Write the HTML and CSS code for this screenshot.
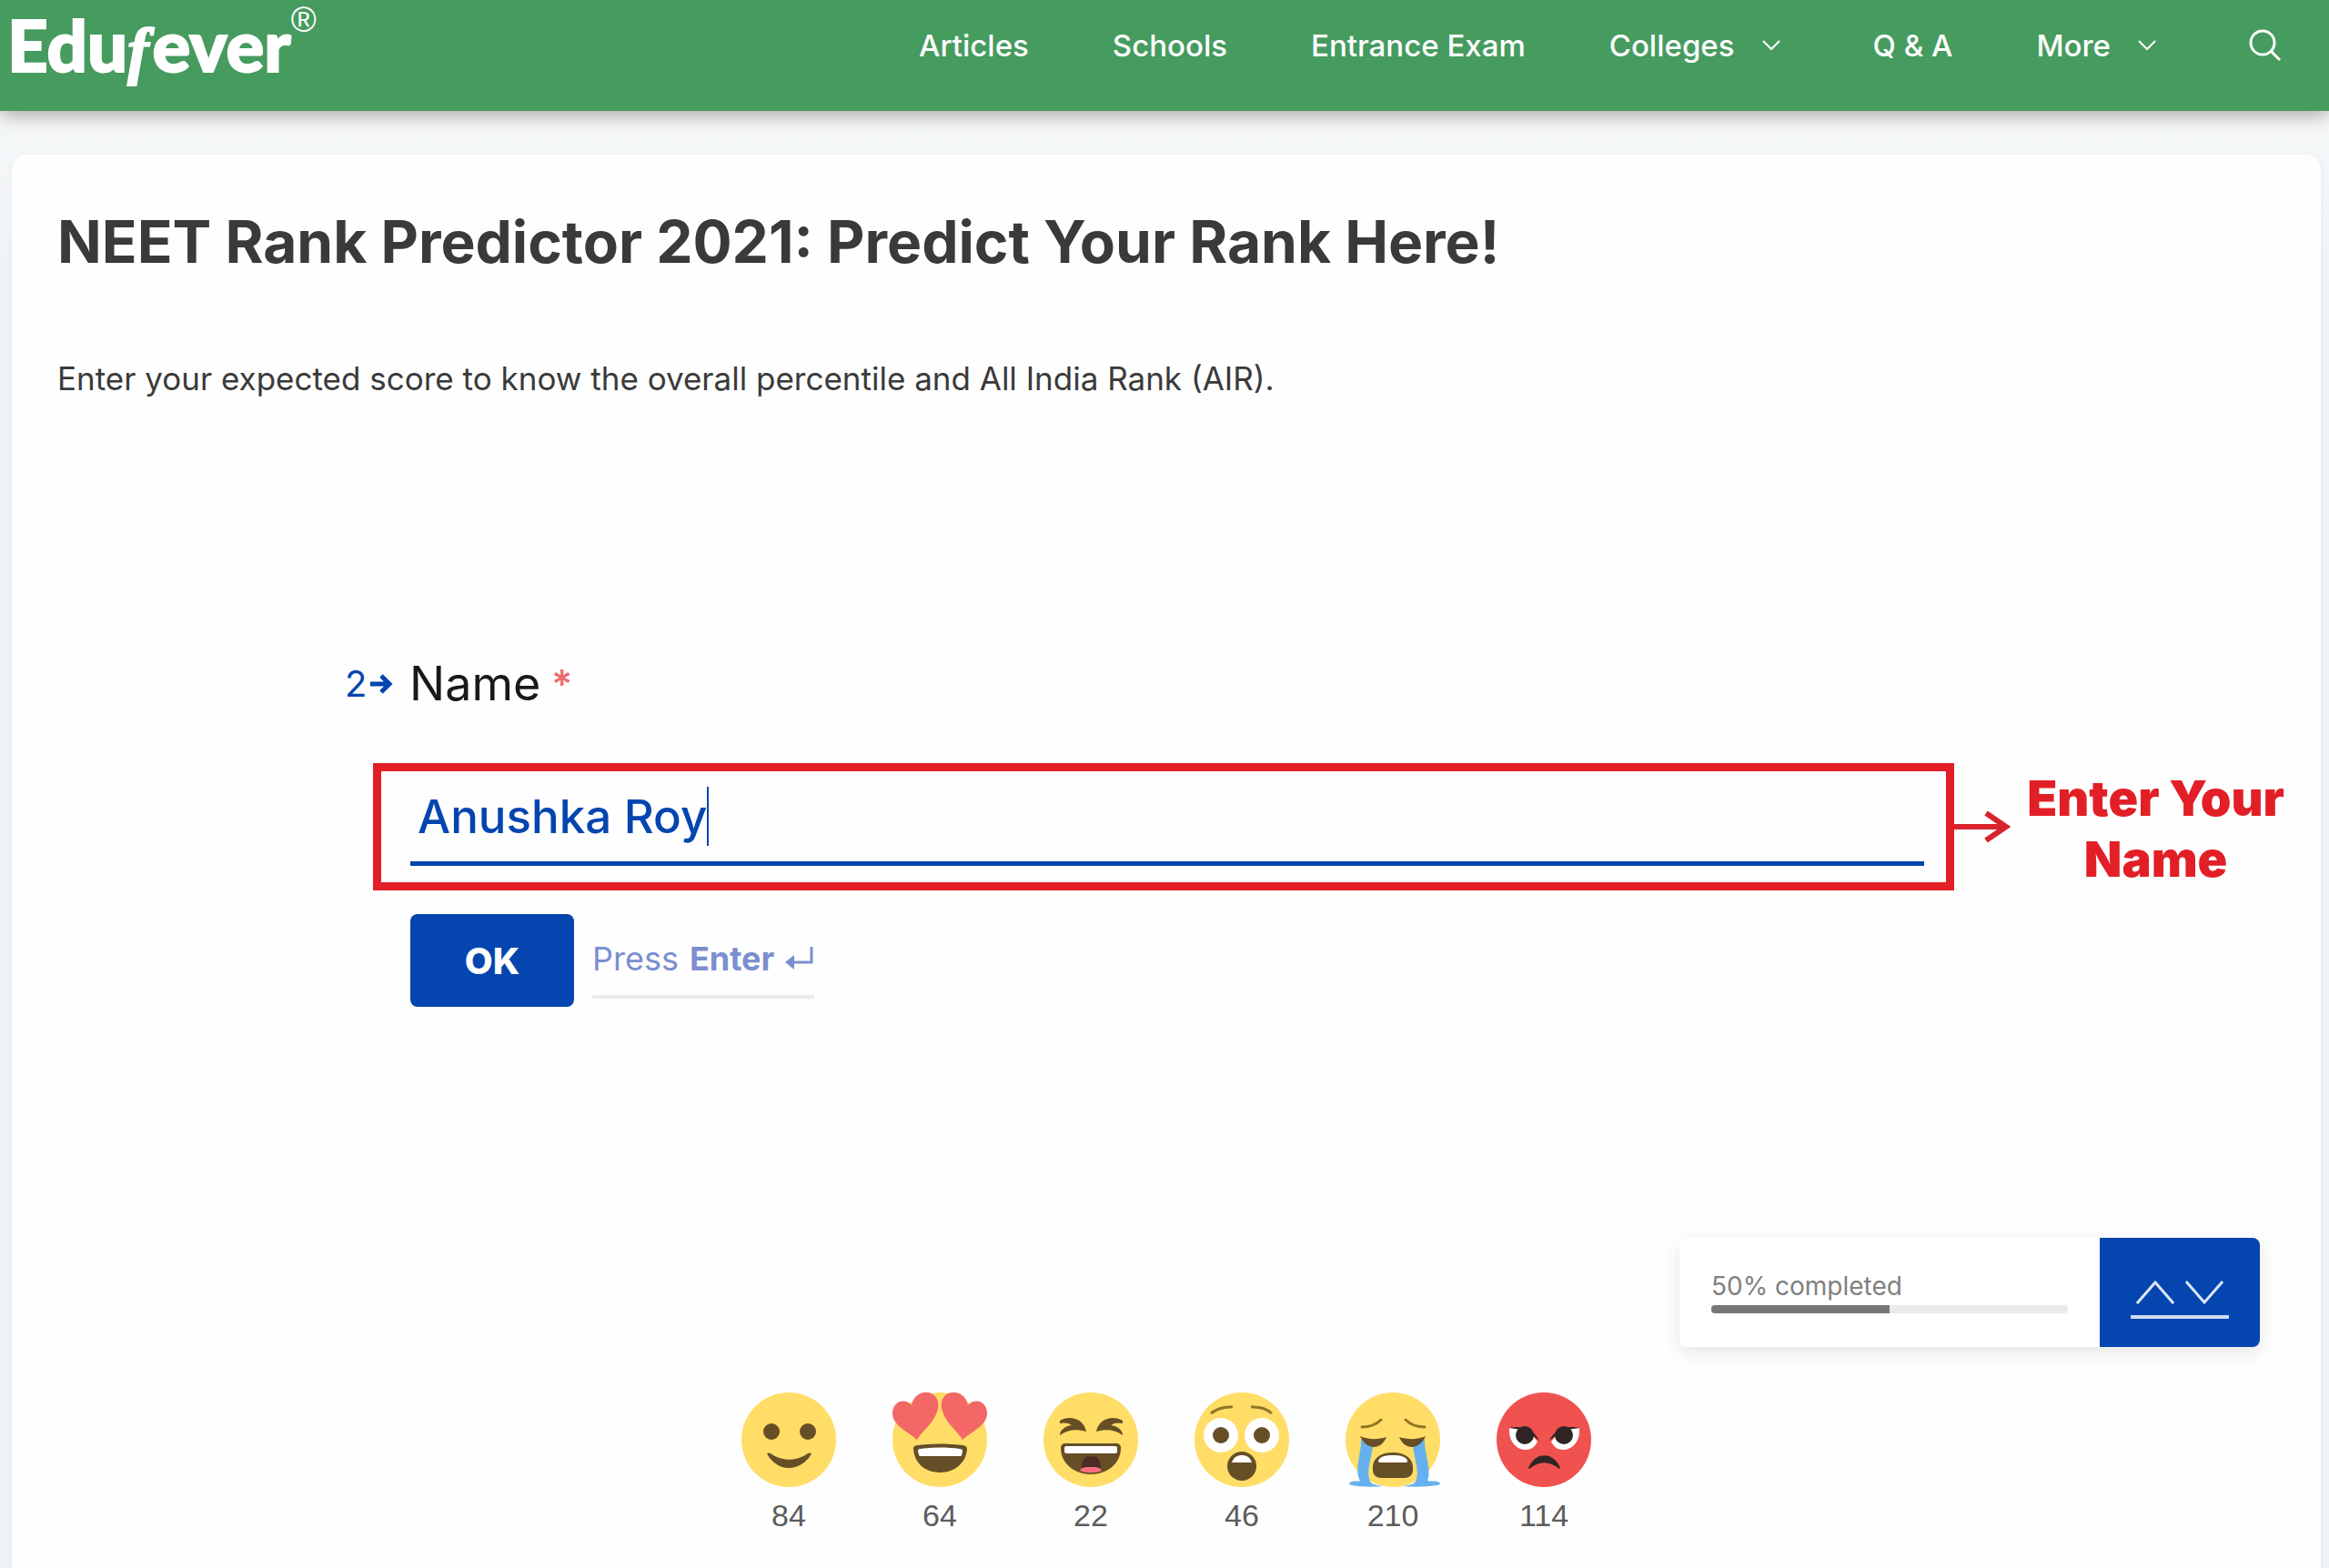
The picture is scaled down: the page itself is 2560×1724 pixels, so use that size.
FILE: index.html
```html
<!DOCTYPE html>
<html lang="en">
<head>
  <meta charset="utf-8" />
  <meta name="viewport" content="width=device-width, initial-scale=1" />
  <title>NEET Rank Predictor 2021 - Edufever</title>
  <link rel="stylesheet" href="styles.css">
</head>
<body>
  <header class="site-header">
    <a href="#" class="logo">Edu<span class="logo-f">f</span>ever<sup>®</sup></a>
    <nav class="nav">
      <a href="#">Articles</a>
      <a href="#">Schools</a>
      <a href="#">Entrance Exam</a>
      <a href="#">Colleges
        <svg class="chevron" viewBox="0 0 20 12"><path d="M1 1l9 9 9-9"/></svg>
      </a>
      <a href="#">Q &amp; A</a>
      <a href="#">More
        <svg class="chevron" viewBox="0 0 20 12"><path d="M1 1l9 9 9-9"/></svg>
      </a>
      <a href="#" aria-label="Search">
        <svg class="search" viewBox="0 0 36 36"><circle cx="15" cy="15" r="13"/><path d="M24 24l10 10"/></svg>
      </a>
    </nav>
  </header>

  <main class="card">
    <h1>NEET Rank Predictor 2021: Predict Your Rank Here!</h1>
    <p class="intro">Enter your expected score to know the overall percentile and All India Rank (AIR).</p>

    <form class="question">
      <label class="question-label" for="name">
        <span class="number">2<svg viewBox="0 0 25 22"><path d="M0 11h21M12 2l9 9-9 9"/></svg></span>
        <span>Name</span>
        <span class="required">*</span>
      </label>

      <div class="answer">
        <div class="frame">
          <label class="field">
            <input type="text" id="name" value="Anushka Roy">
            <span class="caret"></span>
          </label>
        </div>
        <svg class="pointer" viewBox="0 0 62 36"><path d="M0 18h54M35 3l22 15-22 15"/></svg>
        <p class="hint">Enter Your<br>Name</p>
      </div>

      <div class="actions">
        <button type="button" class="ok">OK</button>
        <p class="press">Press <strong>Enter</strong>
          <svg viewBox="0 0 32 28"><path class="line" d="M29 1v17H8"/><path class="head" d="M0 18l10-8v16z"/></svg>
        </p>
      </div>
    </form>

    <div class="progress">
      <div class="progress-info">
        <span id="progress-text">50% completed</span>
        <div class="bar" role="progressbar" aria-labelledby="progress-text" aria-valuenow="50">
          <div class="bar-fill" style="width: 50%"></div>
        </div>
      </div>
      <div class="progress-nav">
        <button type="button" aria-label="Previous"><svg viewBox="0 0 42 26"><path d="M1 25L21 2l20 23"/></svg></button>
        <button type="button" aria-label="Next"><svg viewBox="0 0 42 26"><path d="M1 1l20 23L41 1"/></svg></button>
      </div>
    </div>

    <div class="reactions">
      <button type="button" class="reaction">
        <svg viewBox="0 0 104 104">
          <circle cx="52" cy="52" r="52" fill="#ffdd67"/>
          <g fill="#664e27">
            <circle cx="33" cy="43" r="9"/>
            <circle cx="73" cy="43" r="9"/>
            <path d="M29 69c-2-3 1-3 3-2 12 9 29 9 41 0 2-1 5-1 3 2-5 8-14 14-24 14s-18-6-23-14z"/>
          </g>
        </svg>
        84
      </button>
      <button type="button" class="reaction">
        <svg viewBox="0 0 104 104">
          <circle cx="52" cy="52" r="52" fill="#ffdd67"/>
          <g fill="#f46767">
            <path d="M27 52C18 44-1 36 0 22 1 9 14 6 21 14 23 3 32-1 39 0c9 1 14 11 10 21-4 13-17 22-22 31z"/>
            <path d="M77 52c9-8 28-16 27-30C103 9 90 6 83 14 81 3 72-1 65 0c-9 1-14 11-10 21 4 13 17 22 22 31z"/>
          </g>
          <path fill="#664e27" d="M23 62c0-3 2-4 5-4 16-2 33-2 48 0 3 0 6 1 6 4-1 15-13 26-30 26S24 77 23 62z"/>
          <path fill="#fff" d="M28 65c0-3 1-3 3-3 14-2 29-2 43 0 2 0 3 1 3 3l-1 4c0 1-1 1-2 1H31c-2 0-2-1-2-2z"/>
        </svg>
        64
      </button>
      <button type="button" class="reaction">
        <svg viewBox="0 0 104 104">
          <circle cx="52" cy="52" r="52" fill="#ffdd67"/>
          <g fill="#664e27">
            <path d="M18 31c10-6 26-3 29 12-11-3-21-2-29 4 0-6 6-10 13-11-4-3-9-3-13-2z"/>
            <path d="M87 31c-10-6-26-3-29 12 11-3 21-2 29 4 0-6-6-10-13-11 4-3 9-3 13-2z"/>
            <path d="M19 61c0-3 2-5 5-5h56c3 0 5 2 5 5 0 17-15 29-33 29S19 78 19 61z"/>
          </g>
          <rect x="23" y="59" width="58" height="8" rx="2" fill="#fff"/>
          <path fill="#4c2b25" d="M42 83c0-9 4-13 8-13 1 0 2 1 2 2 0-1 1-2 3-2 4 0 8 4 8 13z"/>
          <path fill="#ff717f" d="M40 86c2-4 6-4 12-4s10 0 12 4c-8 3-16 3-24 0z"/>
        </svg>
        22
      </button>
      <button type="button" class="reaction">
        <svg viewBox="0 0 104 104">
          <circle cx="52" cy="52" r="52" fill="#ffdd67"/>
          <circle cx="29" cy="47" r="19" fill="#fff"/>
          <circle cx="74" cy="47" r="19" fill="#fff"/>
          <g fill="#664e27">
            <circle cx="29" cy="47" r="9"/>
            <circle cx="74" cy="47" r="9"/>
            <circle cx="52" cy="81" r="16"/>
          </g>
          <path fill="#fff" d="M41 77c2-6 6-8 11-8s9 2 11 8z"/>
          <path fill="none" stroke="#917524" stroke-width="3" d="M18 23q10-8 24-7M62 16q14-1 23 7"/>
        </svg>
        46
      </button>
      <button type="button" class="reaction">
        <svg viewBox="0 0 104 104">
          <circle cx="52" cy="52" r="52" fill="#ffdd67"/>
          <g fill="#65b1ef">
            <path d="M17 51l13 7c-1 14-8 28-3 40 2 3 8 4 14 5-12 1-24 1-34-1-4-1-4-3 0-4 3-1 7 0 9-1-7-13 2-31 1-46z"/>
            <path d="M87 51l-13 7c1 14 8 28 3 40-2 3-8 4-14 5 12 1 24 1 38-1 4-1 4-3 0-4-3-1-9 0-11-1 5-13-4-31-3-46z"/>
          </g>
          <g fill="#664e27">
            <path d="M16 48c9 4 20 4 29 1-3 7-8 11-14 11s-12-5-15-12z"/>
            <path d="M88 48c-9 4-20 4-29 1 3 7 8 11 14 11s12-5 15-12z"/>
            <path d="M30 82c0-9 8-16 22-16s22 7 22 16c1 8-3 12-9 12H39c-6 0-10-4-9-12z"/>
          </g>
          <path fill="#fff" d="M36 75c2-5 8-6 16-6s14 1 16 6c0 2-1 2-2 2H38c-1 0-2 0-2-2z"/>
          <path fill="none" stroke="#917524" stroke-width="3" stroke-linecap="round" d="M18 38q13 0 21-8M66 30q8 8 21 8"/>
        </svg>
        210
      </button>
      <button type="button" class="reaction">
        <svg viewBox="0 0 104 104">
          <circle cx="52" cy="52" r="52" fill="#f05250"/>
          <path fill="#fff" d="M14 39c-1 14 7 24 18 24 6 0 10-3 13-9L34 41z"/>
          <path fill="#fff" d="M91 39c1 14-7 24-18 24-6 0-10-3-13-9l11-13z"/>
          <g fill="#302424">
            <circle cx="31" cy="47" r="10"/>
            <circle cx="74" cy="47" r="10"/>
            <path d="M13 39c15-3 27 0 34 14-9-8-19-13-34-14z"/>
            <path d="M92 39c-15-3-27 0-34 14 9-8 19-13 34-14z"/>
            <path d="M36 84c-2-1 0-3 1-5 8-13 23-13 31 0 1 2 3 4 1 5-11-9-22-9-33 0z"/>
          </g>
        </svg>
        114
      </button>
    </div>
  </main>
</body>
</html>
```
FILE: styles.css
```css
* {
  box-sizing: border-box;
}
body {
  margin: 0;
  min-height: 100vh;
  display: flex;
  flex-direction: column;
  font-family: Inter, sans-serif;
  background: linear-gradient(#fafbfb, #eef2f6 360px);
  color: #3a3a3a;
}
h1, p {
  margin: 0;
}
button {
  font-family: inherit;
  border: none;
  padding: 0;
  background: none;
  cursor: pointer;
}
svg {
  display: block;
  fill: none;
}

/* header */
.site-header {
  display: flex;
  justify-content: space-between;
  align-items: flex-start;
  height: 122px;
  padding: 0 52px 0 8px;
  background: #469b5f;
  box-shadow: 0 4px 20px rgba(0,0,0,0.35);
}
.logo {
  font-family: Lato, sans-serif;
  font-weight: 900;
  font-size: 78px;
  line-height: 98px;
  color: #fff;
  text-decoration: none;
  white-space: nowrap;
  -webkit-text-stroke: 2px #fff;
}
.logo-f {
  margin-right: 4px;
  font-family: "Liberation Serif", serif;
  font-style: italic;
  font-size: 70px;
}
.logo sup {
  font-family: "Liberation Sans", sans-serif;
  font-weight: 400;
  font-size: 38px;
  line-height: 38px;
  vertical-align: 44px;
  -webkit-text-stroke: 0;
}
.nav {
  display: flex;
  align-items: center;
  gap: 92px;
  height: 100px;
}
.nav a {
  display: flex;
  align-items: center;
  gap: 30px;
  color: #fff;
  font-size: 33px;
  font-weight: 500;
  text-decoration: none;
  white-space: nowrap;
}
.chevron {
  width: 20px;
  margin-right: 10px;
  stroke: #fff;
  stroke-width: 2;
}
.search {
  width: 36px;
  stroke: #fff;
  stroke-width: 3;
}

/* page card */
.card {
  flex: 1;
  margin: 48px 9px 0 13px;
  padding: 56px 40px 0 50px;
  background: #fefefe;
  border-radius: 16px 16px 0 0;
  box-shadow: 0 0 6px rgba(0,0,0,0.05);
}
h1 {
  font-size: 64px;
  line-height: 80px;
}
.intro {
  margin-top: 80px;
  font-size: 35px;
  line-height: 60px;
}

/* question */
.question {
  margin-top: 268px;
  padding-left: 316px;
}
.question-label {
  display: flex;
  align-items: center;
  font-size: 52px;
  line-height: 76px;
  color: #191919;
}
.number {
  display: flex;
  align-items: center;
  gap: 4px;
  width: 71px;
  font-size: 40px;
  color: #0445af;
}
.number svg {
  width: 25px;
  stroke: #0445af;
  stroke-width: 5;
}
.required {
  margin-left: 12px;
  color: #f0696b;
  font-size: 44px;
  font-weight: 500;
}
.answer {
  display: flex;
  align-items: center;
  margin: 49px 0 0 31px;
}
.frame {
  flex: 1;
  padding: 0 24px 18px 32px;
  border: 9px solid #e21f26;
}
.field {
  display: flex;
  align-items: center;
  height: 104px;
  padding-left: 8px;
  border-bottom: 5px solid #0445af;
}
.field input {
  field-sizing: content;
  padding: 0;
  border: none;
  outline: none;
  background: none;
  color: #0445af;
  font-family: inherit;
  font-size: 51px;
  font-weight: 500;
  caret-color: transparent;
}
.caret {
  width: 2px;
  height: 65px;
  background: #0445af;
}
.pointer {
  width: 62px;
  stroke: #d9232d;
  stroke-width: 6;
}
.hint {
  margin-left: 18px;
  padding-top: 4px;
  font-weight: 900;
  font-size: 54px;
  line-height: 67px;
  text-align: center;
  color: #e21f26;
}
.actions {
  display: flex;
  align-items: center;
  gap: 20px;
  margin: 26px 0 0 72px;
}
.ok {
  width: 180px;
  height: 102px;
  border-radius: 8px;
  background: #0445af;
  color: #fff;
  font-size: 40px;
  font-weight: 800;
}
.press {
  display: flex;
  align-items: center;
  gap: 12px;
  padding: 12px 0;
  border-bottom: 4px solid #ebebeb;
  color: #7b8fd0;
  font-size: 36px;
  line-height: 56px;
}
.press svg {
  width: 32px;
}
.press .line {
  stroke: #7b8fd0;
  stroke-width: 3;
}
.press .head {
  fill: #7b8fd0;
}

/* progress */
.progress {
  display: flex;
  width: 638px;
  height: 120px;
  margin: 254px 27px 0 auto;
  border-radius: 8px;
  overflow: hidden;
  background: #fff;
  box-shadow: 0 6px 20px rgba(0,0,0,0.1);
}
.progress-info {
  flex: 1;
  padding: 36px 35px 0;
  color: #808080;
  font-size: 28px;
  line-height: 34px;
}
.bar {
  height: 9px;
  margin-top: 4px;
  border-radius: 4px;
  overflow: hidden;
  background: #ebebeb;
}
.bar-fill {
  height: 100%;
  background: #777;
}
.progress-nav {
  display: flex;
  flex-wrap: wrap;
  align-content: flex-start;
  justify-content: center;
  gap: 12px;
  width: 176px;
  padding-top: 47px;
  background: #0445af;
}
.progress-nav svg {
  width: 42px;
  stroke: #dbe6f8;
  stroke-width: 3;
}
.progress-nav::after {
  content: "";
  width: 108px;
  height: 4px;
  background: #cddcf2;
}

/* reactions */
.reactions {
  display: flex;
  justify-content: center;
  gap: 62px;
  margin-top: 50px;
  padding-right: 10px;
}
.reaction {
  width: 104px;
  color: #5c5c5c;
  font-family: "Liberation Sans", sans-serif;
  font-size: 34px;
  line-height: 62px;
}
.reaction svg {
  width: 104px;
}
```
